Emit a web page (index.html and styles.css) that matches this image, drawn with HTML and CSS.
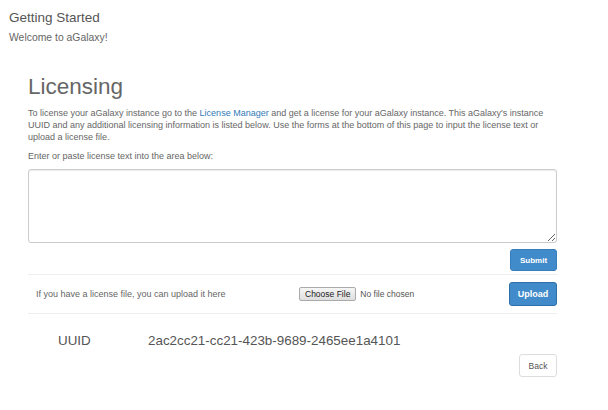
FILE: index.html
```html
<!DOCTYPE html>
<html>
<head>
<meta charset="utf-8">
<link rel="stylesheet" href="styles.css">
</head>
<body>
<header class="page-head">
  <div class="head-title">Getting Started</div>
  <div class="head-sub">Welcome to aGalaxy!</div>
</header>
<main class="container">
  <h1 class="title">Licensing</h1>
  <p class="intro">To license your aGalaxy instance go to the <a class="link" href="#">License Manager</a> and get a license for your aGalaxy instance. This aGalaxy's instance UUID and any additional licensing information is listed below. Use the forms at the bottom of this page to input the license text or upload a license file.</p>
  <p class="hint">Enter or paste license text into the area below:</p>
  <textarea class="license-text"></textarea>
  <div class="submit-row">
    <button class="btn btn-primary btn-submit">Submit</button>
  </div>
  <div class="upload-row">
    <span class="upload-label">If you have a license file, you can upload it here</span>
    <span class="file-input"><span class="choose">Choose File</span><span class="nofile">No file chosen</span></span>
    <button class="btn btn-primary btn-upload">Upload</button>
  </div>
  <div class="uuid-row">
    <span class="uuid-label">UUID</span>
    <span class="uuid-value">2ac2cc21-cc21-423b-9689-2465ee1a4101</span>
  </div>
  <div class="back-row">
    <button class="btn btn-default">Back</button>
  </div>
</main>
</body>
</html>
```
FILE: styles.css
```css
* { box-sizing: border-box; }
html, body { margin: 0; padding: 0; background: #fff; }
body {
  font-family: "Liberation Sans", Arial, Helvetica, sans-serif;
  color: #555;
  width: 608px;
  height: 410px;
  overflow: hidden;
}
.page-head { padding: 10px 0 0 9px; }
.head-title { font-size: 13.5px; line-height: 16px; color: #555; }
.head-sub { font-size: 10.4px; line-height: 14px; margin-top: 5px; color: #666; }
.container { margin-left: 28px; width: 529px; }
.title {
  font-size: 22.5px;
  font-weight: normal;
  color: #666;
  margin: 28px 0 0 0;
  line-height: 28px;
}
.intro {
  font-size: 9px;
  line-height: 12px;
  margin: 6px 0 0 0;
  color: #666;
}
.link { color: #337ab7; text-decoration: none; }
.hint { font-size: 9px; line-height: 12px; margin: 7px 0 0 0; color: #666; }
.license-text {
  display: block;
  width: 529px;
  height: 74px;
  margin-top: 7px;
  border: 1px solid #ccc;
  border-radius: 3px;
  box-shadow: inset 0 1px 1px rgba(0,0,0,0.075);
  resize: vertical;
}
.submit-row {
  display: flex;
  justify-content: flex-end;
  padding-top: 6px;
  padding-bottom: 3px;
  border-bottom: 1px solid #eee;
}
.btn {
  font-family: "Liberation Sans", Arial, sans-serif;
  border-radius: 3px;
  cursor: pointer;
  padding: 0;
}
.btn-primary {
  background: #428bca;
  border: 1px solid #357ebd;
  color: #fff;
}
.btn-submit {
  width: 47px;
  height: 22px;
  font-size: 8px;
  font-weight: bold;
}
.upload-row {
  display: flex;
  align-items: center;
  height: 39px;
  border-bottom: 1px solid #eee;
  padding-left: 8px;
}
.upload-label { font-size: 9px; color: #666; width: 263px; }
.file-input { display: flex; align-items: center; font-size: 8.5px; }
.choose {
  border: 1px solid #aaa;
  background: linear-gradient(#f6f6f6, #dedede);
  border-radius: 2px;
  padding: 0 5px;
  height: 14px;
  line-height: 12px;
  color: #222;
}
.nofile { margin-left: 4px; color: #555; }
.btn-upload {
  margin-left: auto;
  width: 48px;
  height: 24px;
  font-size: 9px;
  font-weight: bold;
  border-color: #2f6fa7;
}
.uuid-row {
  display: flex;
  align-items: center;
  height: 52px;
  padding-left: 30px;
  font-size: 13.4px;
  color: #555;
}
.uuid-label { width: 90px; }
.back-row { display: flex; justify-content: flex-end; margin-top: -12px; }
.btn-default {
  background: #fff;
  border: 1px solid #ddd;
  color: #555;
  width: 38px;
  height: 23px;
  font-size: 8.5px;
}
```
